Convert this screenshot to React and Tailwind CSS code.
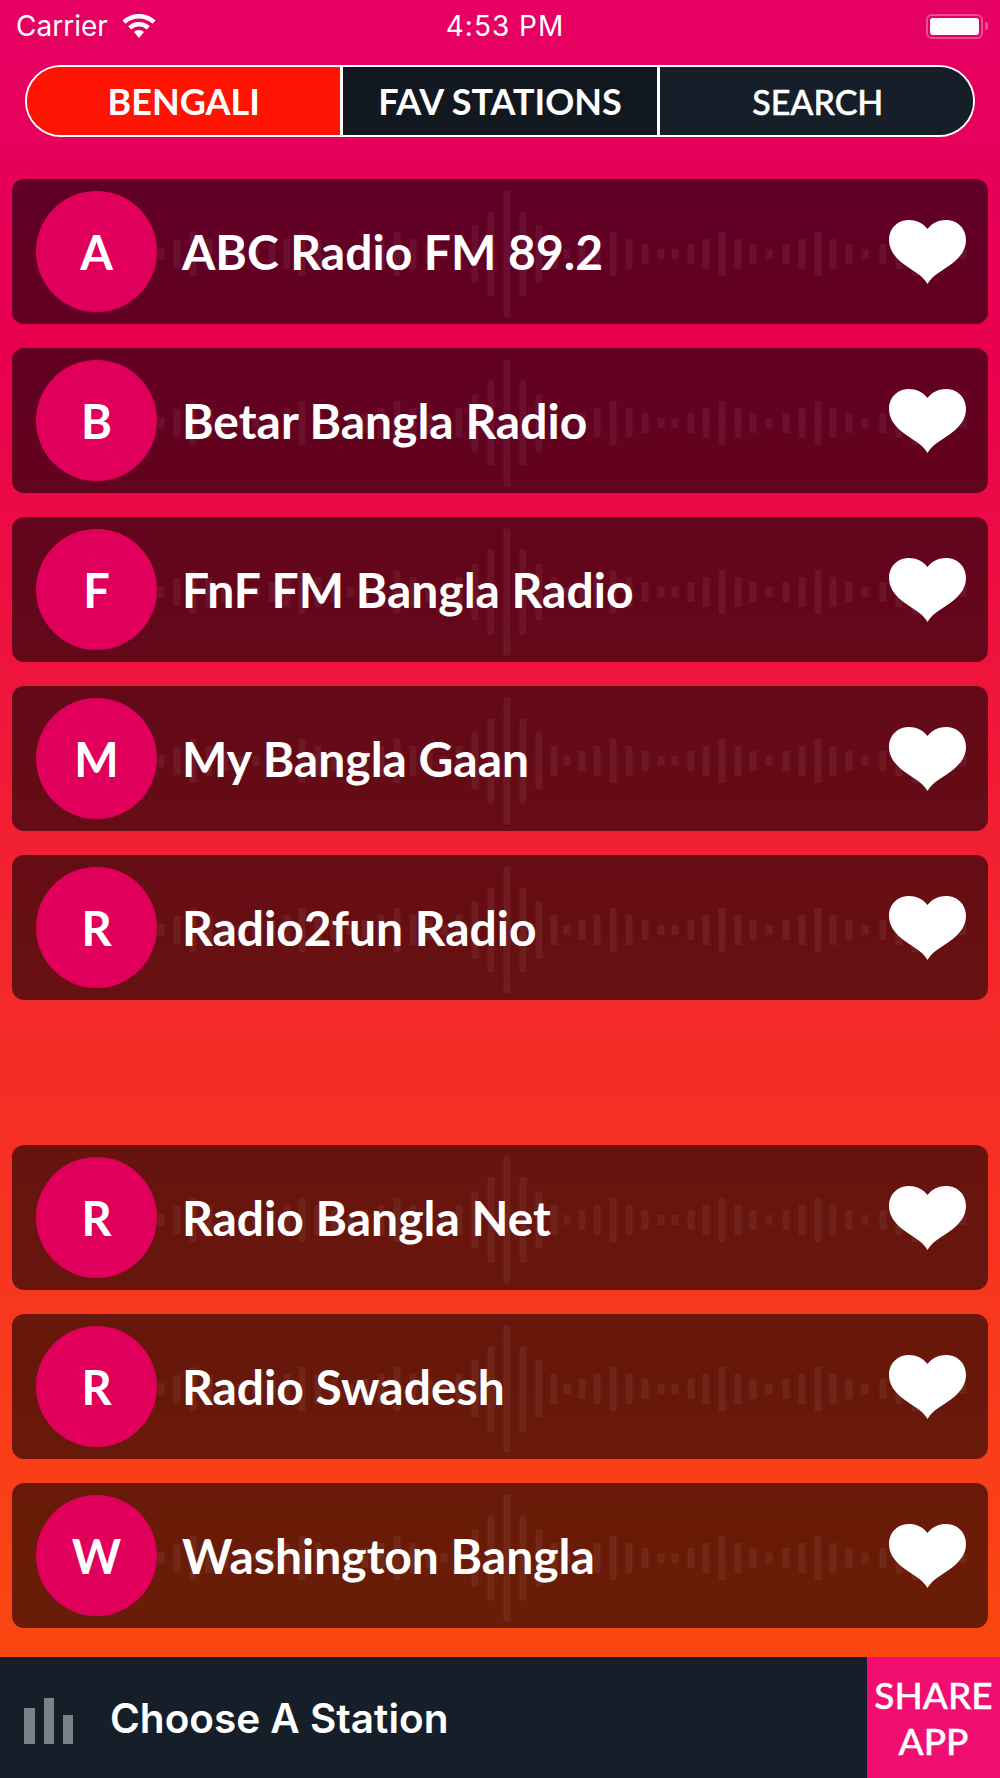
import React from "react";

const BARS = [
  [161, 12], [177, 28], [193, 44], [209, 30], [225, 20], [241, 10], [256, 10], [272, 20], [287, 30],
  [302, 44], [318, 30], [334, 20], [350, 10], [365, 20], [381, 30], [397, 44], [413, 30], [429, 20],
  [444, 10], [459, 30], [475, 57], [491, 85], [507, 127], [523, 85], [539, 57], [554, 30], [567, 10],
  [582, 20], [597, 30], [613, 44], [629, 30], [645, 20], [661, 10], [675, 10], [691, 20], [706, 30],
  [722, 44], [738, 30], [753, 20], [769, 10], [786, 20], [802, 30], [818, 44], [833, 30], [849, 20],
  [865, 10], [883, 20], [899, 30], [915, 44], [931, 30], [947, 20], [963, 10],
];

function Wave() {
  return (
    <svg className="absolute inset-0 h-full w-full" viewBox="0 0 976 145" aria-hidden="true">
      {BARS.map(([x, h]) => (
        <rect key={x} x={x - 12 - 3.5} y={75 - h / 2} width="7" height={h} fill="#ffffff" fillOpacity="0.06" />
      ))}
    </svg>
  );
}

function Heart() {
  return (
    <svg className="relative h-[64px] w-[77px]" viewBox="0 0 77 64" aria-hidden="true">
      <path
        d="M38.500 9C34 3 27 0 20 0C8.500 0 0 8.500 0 20C0 29 5 36 12 42C20 49 33 54 38.500 64C44 54 57 49 65 42C72 36 77 29 77 20C77 8.500 68.500 0 57 0C50 0 43 3 38.500 9Z"
        fill="#ffffff"
      />
    </svg>
  );
}

function Row({ letter, name }) {
  return (
    <div className="relative flex h-[145px] items-center overflow-hidden rounded-[12px] bg-black/[0.58] pl-[24px] pr-[22px]">
      <Wave />
      <div className="relative flex h-[121px] w-[121px] shrink-0 items-center justify-center rounded-full bg-[#e0005c] pt-[1px] text-[47px] font-bold text-white">
        {letter}
      </div>
      <div className="relative ml-[25px] flex-1 text-[48px] font-bold text-white">{name}</div>
      <Heart />
    </div>
  );
}

function Tab({ label, className }) {
  return (
    <div className={`flex flex-1 items-center justify-center text-white ${className}`}>
      {label}
    </div>
  );
}

export default function App() {
  return (
    <div
      className="flex h-[1778px] w-full flex-col overflow-hidden bg-[linear-gradient(180deg,#e60064_0%,#e8004f_20%,#f4282a_55%,#fc4c0c_100%)] font-['Lato',sans-serif]"
    >
      <div className="flex h-[52px] shrink-0 items-center pl-[16px] pr-[12px] font-['Inter',sans-serif] text-[28px] text-white">
        <div className="flex flex-1 items-center gap-[14px]">
          <span>Carrier</span>
          <svg className="h-[24px] w-[34px]" viewBox="0 0 34 24" aria-hidden="true">
            <path d="M17 0C10.500 0 4.800 2.500 0.500 6.500L3.500 9.800C7 6.500 11.800 4.500 17 4.500C22.200 4.500 27 6.500 30.500 9.800L33.500 6.500C29.200 2.500 23.500 0 17 0Z" fill="#fff" />
            <path d="M17 8C12.800 8 9 9.600 6.200 12.200L9.300 15.500C11.300 13.700 14 12.500 17 12.500C20 12.500 22.700 13.700 24.700 15.500L27.800 12.200C25 9.600 21.200 8 17 8Z" fill="#fff" />
            <path d="M17 16C15 16 13.300 16.800 12 18L17 24L22 18C20.700 16.800 19 16 17 16Z" fill="#fff" />
          </svg>
        </div>
        <span className="ml-[6px] tracking-[1px]">4:53 PM</span>
        <div className="flex flex-1 items-center justify-end gap-[2px]">
          <div className="h-[25px] w-[57px] rounded-[6px] border-2 border-white/30 p-[2px]">
            <div className="h-full w-full rounded-[3px] bg-white" />
          </div>
          <div className="h-[8px] w-[3px] rounded-r-[2px] bg-white/30" />
        </div>
      </div>

      <div className="mx-[25px] mt-[13px] flex h-[72px] shrink-0 overflow-hidden rounded-full border-2 border-white">
        <Tab label="BENGALI" className="bg-[#ff1303] text-[36px] font-bold" />
        <div className="w-[3px] bg-white" />
        <Tab label="FAV STATIONS" className="bg-[#12181f] text-[36px] font-bold" />
        <div className="w-[3px] bg-white" />
        <Tab label="SEARCH" className="bg-[#161f29] indent-[3px] text-[34px] font-medium [-webkit-text-stroke:0.5px_white]" />
      </div>

      <div className="mx-[12px] mt-[42px] flex flex-col gap-[24px]">
        <Row letter="A" name="ABC Radio FM 89.2" />
        <Row letter="B" name="Betar Bangla Radio" />
        <Row letter="F" name="FnF FM Bangla Radio" />
        <Row letter="M" name="My Bangla Gaan" />
        <Row letter="R" name="Radio2fun Radio" />
      </div>

      <div className="mx-[12px] mt-[145px] flex flex-col gap-[24px]">
        <Row letter="R" name="Radio Bangla Net" />
        <Row letter="R" name="Radio Swadesh" />
        <Row letter="W" name="Washington Bangla" />
      </div>

      <div className="mt-auto flex h-[121px] shrink-0 bg-[#161f29]">
        <div className="flex flex-1 items-center">
          <div className="ml-[24px] mt-[6px] flex h-[46px] items-end gap-[9px]">
            <div className="h-[36px] w-[11px] bg-[#7b8188]" />
            <div className="h-[46px] w-[10px] bg-[#7b8188]" />
            <div className="h-[29px] w-[10px] bg-[#7b8188]" />
          </div>
          <span className="ml-[37px] mt-[4px] font-['Inter',sans-serif] text-[40.500px] font-semibold text-white">Choose A Station</span>
        </div>
        <div className="flex w-[133px] flex-col items-center justify-center bg-[#f10e70] text-center text-[37px] font-medium leading-[46px] text-white [-webkit-text-stroke:0.4px_white]">
          <span>SHARE</span>
          <span>APP</span>
        </div>
      </div>
    </div>
  );
}
